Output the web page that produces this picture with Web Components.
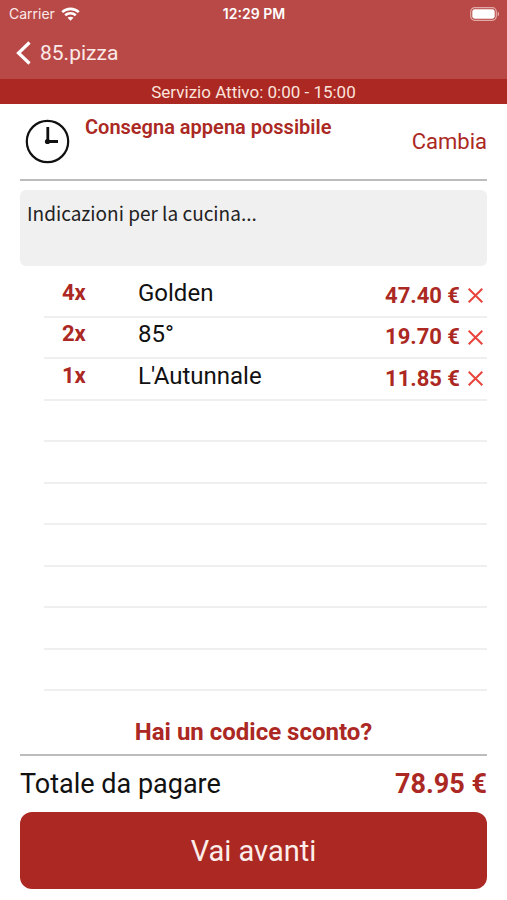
<!DOCTYPE html>
<html lang="it">
<head>
<meta charset="utf-8">
<meta name="viewport" content="width=device-width, initial-scale=1">
<title>85.pizza</title>
<style>
  :root { --brand: #ab2823; --nav: #b94947; --remove: #e8443c; --rule: #bcbcbc; --hairline: #efefef; --gutter: 20px; }
  body { margin: 0; background: #fff; color: #111; font-family: Roboto, sans-serif; }
</style>
</head>
<body>
<checkout-page></checkout-page>
<script>
  const define = (name, html) => {
    const template = document.createElement('template');
    template.innerHTML = html;
    customElements.define(name, class extends HTMLElement {
      constructor() {
        super();
        this.attachShadow({ mode: 'open' }).append(template.content.cloneNode(true));
      }
    });
  };

  define('status-bar', `
    <style>
      :host { display: grid; grid-template-columns: 1fr auto 1fr; align-items: center; height: 28px; padding: 0 8px 0 9px; color: #fff; font: 14px/20px Inter, sans-serif; }
      .carrier { display: flex; align-items: center; gap: 6px; color: #fbe9e7; }
      .time { font-weight: 600; }
      .battery { justify-self: end; }
      svg { display: block; }
    </style>
    <span class="carrier"><span>Carrier</span>
      <svg width="19" height="14" viewBox="0 0 19 14" fill="none" stroke="#fff" stroke-width="2.6" aria-hidden="true">
        <path d="M1.2 5.1C5.9.8 13.1.8 17.8 5.1"/>
        <path d="M4.2 8.3c3-2.7 7.600-2.700 10.600 0"/>
        <path d="M9.500 13.800 6.500 10.800c1.700-1.500 4.300-1.500 6 0z" fill="#fff" stroke="none"/>
      </svg></span>
    <span class="time">12:29 PM</span>
    <svg class="battery" width="29" height="14" viewBox="0 0 29 14" aria-hidden="true">
      <rect x=".7" y=".7" width="25.600" height="12.600" rx="4" fill="none" stroke="#e0aaa7" stroke-width="1.200"/>
      <rect x="2.300" y="2.300" width="22.400" height="9.400" rx="2.400" fill="#fff"/>
      <path d="M27.700 4.800c2 .8 2 3.600 0 4.400z" fill="#e0aaa7"/>
    </svg>`);

  define('nav-bar', `
    <style>
      :host { display: flex; align-items: center; box-sizing: border-box; height: 51px; padding: 0 16px 2px; }
      a { display: flex; align-items: center; gap: 9px; color: #fff; text-decoration: none; font-size: 21px; line-height: 28px; }
      span { color: #fbe9e7; }
    </style>
    <a href="#"><svg width="15" height="24" viewBox="0 0 15 24" fill="none" stroke="#fff" stroke-width="3.200" aria-hidden="true"><path d="M13.500 1.500 2.500 12l11 10.500"/></svg><span><slot></slot></span></a>`);

  define('service-banner', `
    <style>:host { display: block; padding: 2px 0 1px; background: var(--brand); color: #fce4dd; text-align: center; font-size: 17px; line-height: 22px; }</style>
    <slot></slot>`);

  define('delivery-time', `
    <style>
      :host { display: flex; align-items: center; height: 75px; padding-left: 5px; border-bottom: 2px solid var(--rule); }
      svg { flex: none; margin-right: 15px; }
      h1 { flex: 1; align-self: flex-start; margin: 11px 0 0; color: var(--brand); font-size: 20px; line-height: 24px; font-weight: 600; }
      button { padding: 0; border: 0; background: none; color: var(--brand); font: 22px/28px Roboto, sans-serif; cursor: pointer; }
    </style>
    <svg width="45" height="45" viewBox="0 0 45 45" fill="none" stroke="#111" aria-hidden="true">
      <circle cx="22.500" cy="22.500" r="20.700" stroke-width="2.200"/>
      <path d="M22.800 8v14.500M22.800 22.500H33" stroke-width="2.800"/><circle cx="22.500" cy="22.500" r="2.600" fill="#111" stroke="none"/>
    </svg>
    <h1><slot></slot></h1>
    <button type="button">Cambia</button>`);

  define('kitchen-notes', `
    <style>
      :host { display: block; }
      textarea { display: block; box-sizing: border-box; width: 100%; height: 76px; padding: 8px 7px; border: 0; border-radius: 6px; resize: none; background: #f0f0f0; color: #222; font: 19px/30px "Noto Sans CJK JP", sans-serif; }
      textarea::placeholder { color: #222; opacity: 1; }
    </style>
    <textarea aria-label="Indicazioni per la cucina" placeholder="Indicazioni per la cucina..."></textarea>`);

  define('order-list', `
    <style>
      :host { display: grid; grid-auto-rows: 1fr; flex: 1; margin-left: 24px; }
    </style>
    <slot></slot>`);

  define('order-row', `
    <style>
      :host { display: grid; grid-template-columns: 76px 1fr auto auto; align-items: center; padding: 0 4px 0 18px; box-sizing: border-box; border-bottom: 2px solid var(--hairline); }
      .qty, .price { color: var(--brand); font-size: 22px; line-height: 28px; font-weight: 700; }
      .qty, .name { padding-bottom: 6px; }
      .name { font-size: 24px; line-height: 28px; }
      button { display: flex; padding: 0 0 0 8px; border: 0; background: none; cursor: pointer; }
      :host([empty]) > *, :host([empty]) .qty, :host([empty]) .name, :host([empty]) .price, :host([empty]) button { display: none; }
    </style>
    <span class="qty"><slot name="qty"></slot></span>
    <span class="name"><slot></slot></span>
    <span class="price"><slot name="price"></slot></span>
    <button type="button" aria-label="Rimuovi"><svg width="15" height="15" viewBox="0 0 15 15" fill="none" stroke="var(--remove)" stroke-width="2" aria-hidden="true"><path d="M.7.7l13.600 13.600M14.300.7.7 14.300"/></svg></button>`);

  define('order-summary', `
    <style>
      :host { display: block; padding: 25px 0 11px; }
      a { display: block; padding-bottom: 6px; border-bottom: 2px solid var(--rule); text-align: center; color: var(--brand); font-size: 24px; line-height: 32px; font-weight: 700; text-decoration: none; }
      .total { display: flex; justify-content: space-between; padding: 10px 0; font-size: 27px; line-height: 36px; }
      strong { color: var(--brand); }
      button { display: block; width: 100%; height: 77px; padding: 0; border: 0; border-radius: 12px; background: var(--brand); color: #fdeeea; font: 29px/36px Roboto, sans-serif; cursor: pointer; }
    </style>
    <a href="#">Hai un codice sconto?</a>
    <div class="total"><span>Totale da pagare</span><strong><slot></slot></strong></div>
    <button type="button">Vai avanti</button>`);

  define('checkout-page', `
    <style>
      :host { display: flex; flex-direction: column; min-height: 100vh; }
      header { background: var(--nav); }
      main { display: flex; flex-direction: column; flex: 1; padding: 0 var(--gutter); }
      kitchen-notes { margin: 9px 0 10px; }
    </style>
    <header><status-bar></status-bar><nav-bar>85.pizza</nav-bar><service-banner>Servizio Attivo: 0:00 - 15:00</service-banner></header>
    <main>
      <delivery-time>Consegna appena possibile</delivery-time>
      <kitchen-notes></kitchen-notes>
      <order-list role="list">
        <order-row role="listitem"><span slot="qty">4x</span>Golden<span slot="price">47.40 €</span></order-row>
        <order-row role="listitem"><span slot="qty">2x</span>85°<span slot="price">19.70 €</span></order-row>
        <order-row role="listitem"><span slot="qty">1x</span>L'Autunnale<span slot="price">11.85 €</span></order-row>
        <order-row empty></order-row><order-row empty></order-row><order-row empty></order-row><order-row empty></order-row>
        <order-row empty></order-row><order-row empty></order-row><order-row empty></order-row>
      </order-list>
      <order-summary>78.95 €</order-summary>
    </main>`);
</script>
</body>
</html>
